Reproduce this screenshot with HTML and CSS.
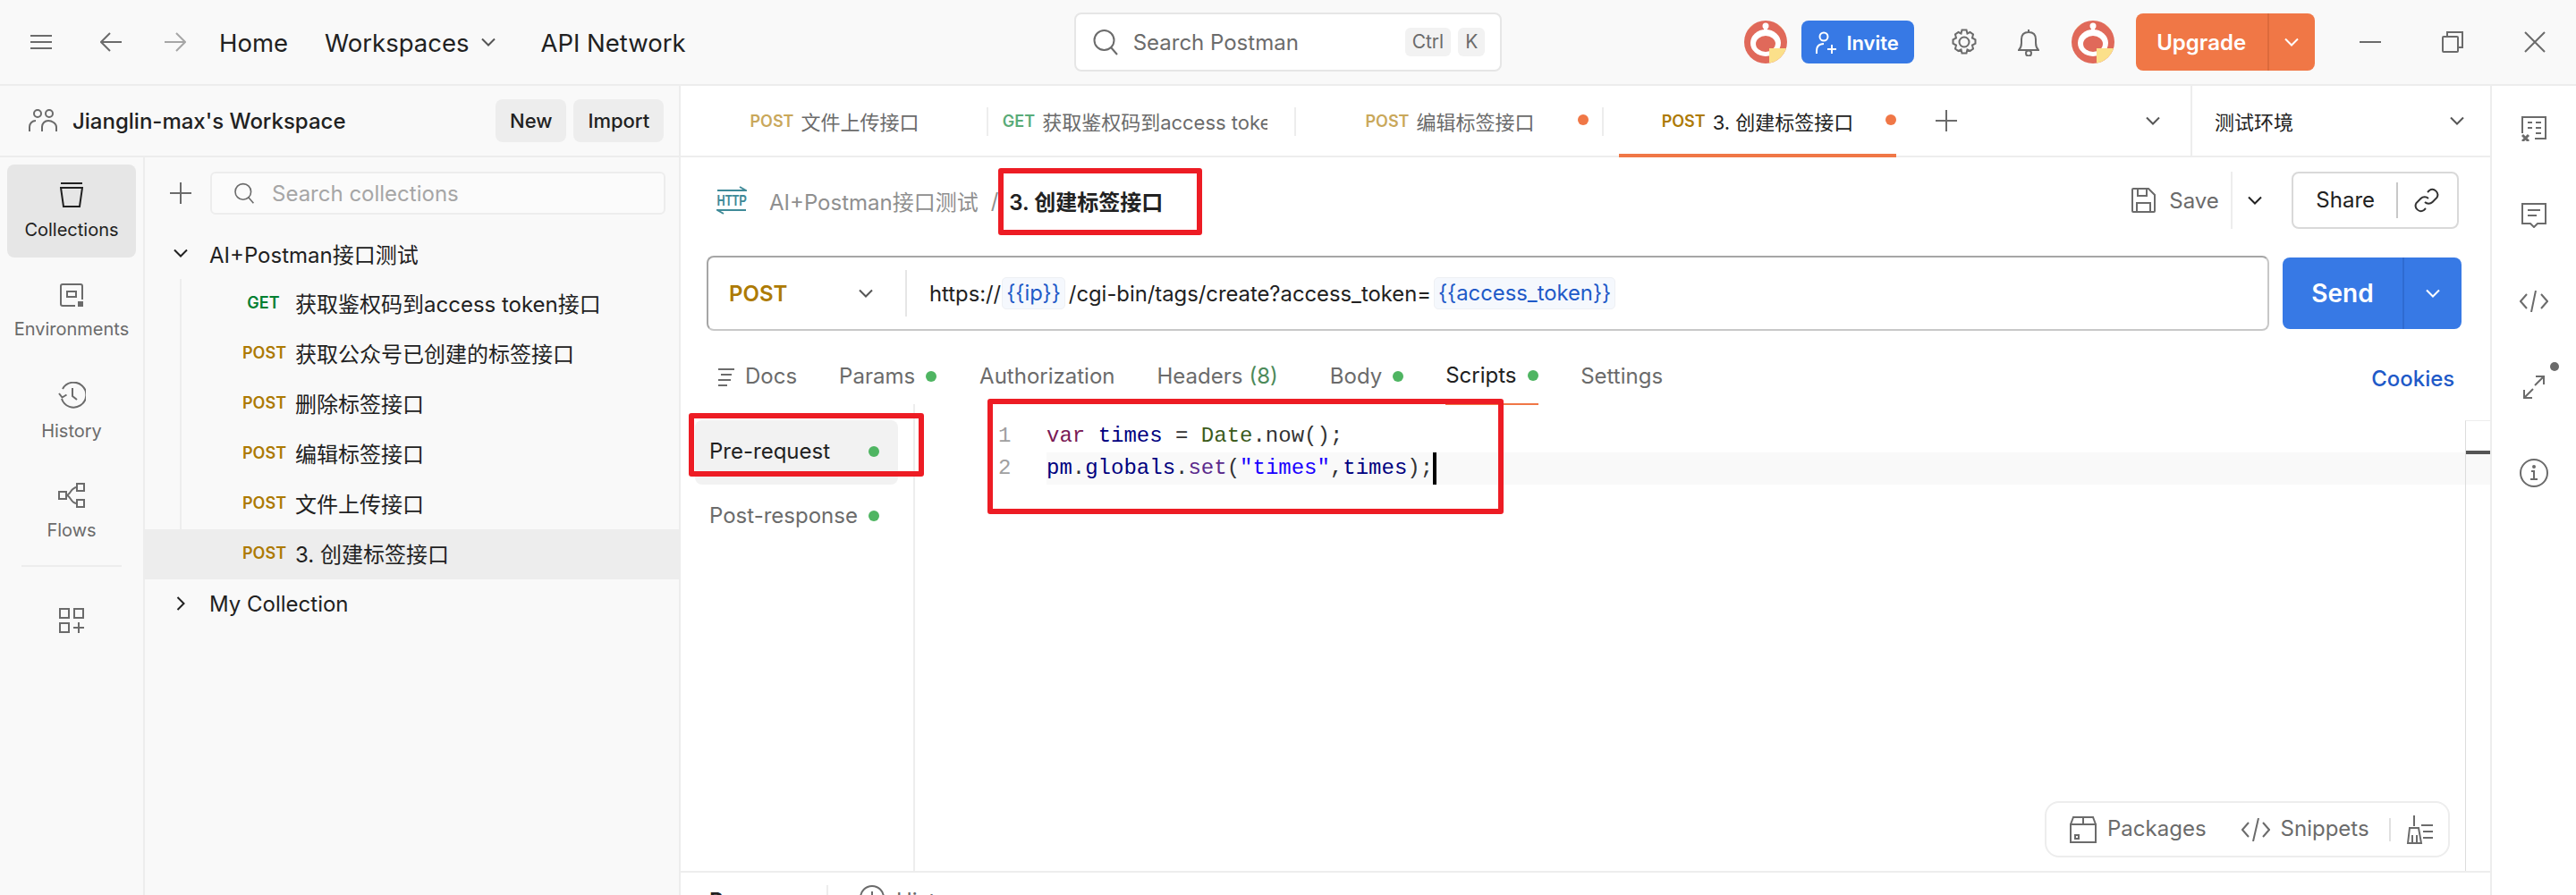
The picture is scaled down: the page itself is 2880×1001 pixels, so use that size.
FILE: index.html
```html
<!DOCTYPE html>
<html lang="en">
<head>
    <meta charset="UTF-8">
    <title>Postman</title>
    <link rel="stylesheet" href="styles.css">
</head>
<body>
    <svg class="sprite" width="0" height="0">
        <defs>
            <clipPath id="avatarClip"><circle cx="24" cy="24" r="24"/></clipPath>
            <symbol id="avatar" viewBox="0 0 48 48">
                <g clip-path="url(#avatarClip)">
                    <rect width="48" height="48" fill="#e0695a"/>
                    <path d="M33 0h15v14zM15 0H0v14z" fill="#fbe08a"/>
                    <rect x="22" y="5" width="4" height="8" fill="#fff"/>
                    <circle cx="24" cy="6" r="3.5" fill="#fff"/>
                    <ellipse cx="24" cy="25" rx="17" ry="15" fill="#fff"/>
                    <ellipse cx="24" cy="26" rx="11" ry="9" fill="#e0695a"/>
                    <rect x="28" y="31" width="20" height="17" fill="#fbe08a"/>
                </g>
            </symbol>
            <symbol id="chev" viewBox="0 0 16 10">
                <path d="M1 1.5 8 8.500l7-7" fill="none" stroke="currentColor" stroke-width="2"/>
            </symbol>
            <symbol id="search" viewBox="0 0 30 30">
                <circle cx="13.500" cy="13" r="11" fill="none" stroke="currentColor" stroke-width="2"/>
                <path d="M21 21l7 8" fill="none" stroke="currentColor" stroke-width="2"/>
            </symbol>
        </defs>
    </svg>

    <header class="topbar">
        <svg class="ico menu" width="24" height="16" viewBox="0 0 24 16"><path d="M0 1h24M0 8h24M0 15h24"/></svg>
        <svg class="ico back" width="24" height="22" viewBox="0 0 24 22"><path d="M11 1 1 11l10 10M1 11h23"/></svg>
        <svg class="ico fwd" width="24" height="22" viewBox="0 0 24 22"><path d="M13 1l10 10-10 10M23 11H0"/></svg>
        <a class="top-link home">Home</a>
        <a class="top-link spaces">Workspaces</a>
        <svg class="top-chev" width="16" height="10"><use href="#chev"/></svg>
        <a class="top-link network">API Network</a>

        <div class="global-search">
            <svg class="gs-icon" width="30" height="30"><use href="#search"/></svg>
            <span class="gs-text">Search Postman</span>
            <span class="key key-ctrl">Ctrl</span>
            <span class="key key-k">K</span>
        </div>

        <svg class="avatar avatar-one" width="48" height="48"><use href="#avatar"/></svg>
        <button class="invite">
            <svg class="ico-white" width="24" height="26" viewBox="0 0 24 26"><circle cx="9" cy="6" r="4.500"/><path d="M1 25v-3c0-5 3-8 8-8M13 20h10M18 15v10"/></svg>
            Invite
        </button>
        <svg class="ico gear" width="30" height="30" viewBox="0 0 30 30"><circle cx="15" cy="15" r="5.500"/><path d="M12.500 1.500h5l1 4 3-1.500 3.500 2.500-1 4 3.500 1.800v4.400l-3.500 1.800 1 4-3.500 2.500-3-1.500-1 4h-5l-1-4-3 1.500L5 22.500l1-4-3.500-1.800v-4.400L6 10.500l-1-4L8.500 4l3 1.500z"/></svg>
        <svg class="ico bell" width="24" height="31" viewBox="0 0 24 31"><path d="M1 24c2-2 3-4 3-8V12c0-5 3-8 8-8s8 3 8 8v4c0 4 1 6 3 8zM12 4V1"/><circle cx="12" cy="27.500" r="3"/></svg>
        <svg class="avatar avatar-two" width="48" height="48"><use href="#avatar"/></svg>
        <div class="upgrade">
            <span class="upgrade-label">Upgrade</span>
            <span class="upgrade-more"><svg width="16" height="10"><use href="#chev"/></svg></span>
        </div>
        <svg class="ico win-min" width="24" height="2" viewBox="0 0 24 2"><path d="M0 1h24"/></svg>
        <svg class="ico win-max" width="24" height="24" viewBox="0 0 24 24"><rect x="1" y="6" width="17" height="17" rx="1"/><path d="M6 6V1h17v17h-5"/></svg>
        <svg class="ico win-close" width="24" height="24" viewBox="0 0 24 24"><path d="M1 1l22 22M23 1 1 23"/></svg>
    </header>

    <div class="app">
        <aside class="sidebar">
            <div class="ws-head">
                <svg class="ico ws-icon" width="32" height="26" viewBox="0 0 32 26"><circle cx="10" cy="5" r="4"/><circle cx="23" cy="5" r="4"/><path d="M1 25v-5c0-4 3-7 7-7M15 25v-5c0-4 3-7 7-7s9 3 9 7v5"/></svg>
                <span class="ws-name">Jianglin-max's Workspace</span>
                <div class="ws-btn ws-new">New</div>
                <div class="ws-btn">Import</div>
            </div>
            <div class="side-body">
                <nav class="rail">
                    <div class="rail-item active">
                        <svg class="ico" width="26" height="28" viewBox="0 0 26 28"><path d="M1 1h24M1 6h24l-3 21H4z"/></svg>
                        <span>Collections</span>
                    </div>
                    <div class="rail-item">
                        <svg class="ico" width="26" height="26" viewBox="0 0 26 26"><path d="M17 25H3a2 2 0 0 1-2-2V3a2 2 0 0 1 2-2h20a2 2 0 0 1 2 2v15M8 9h10v6H8z"/><rect x="20" y="20" width="6" height="6" class="solid"/></svg>
                        <span>Environments</span>
                    </div>
                    <div class="rail-item">
                        <svg class="ico" width="32" height="30" viewBox="0 0 32 30"><path d="M5 19a14 14 0 1 0 1-11M2 13l3.500 4.500 5-3M17 7v9l5 4"/></svg>
                        <span>History</span>
                    </div>
                    <div class="rail-item">
                        <svg class="ico" width="30" height="28" viewBox="0 0 30 28"><rect x="1" y="10" width="8" height="8"/><rect x="21" y="1" width="8" height="8"/><rect x="21" y="19" width="8" height="8"/><path d="M9 14c5 0 5-9 12-9M9 14c5 0 5 9 12 9"/></svg>
                        <span>Flows</span>
                    </div>
                    <div class="rail-divider"></div>
                    <svg class="ico rail-add" width="28" height="28" viewBox="0 0 28 28"><rect x="1" y="1" width="10" height="10"/><rect x="17" y="1" width="10" height="10"/><rect x="1" y="17" width="10" height="10"/><path d="M16 22h12M22 16v12"/></svg>
                </nav>
                <section class="collections">
                    <div class="coll-tools">
                        <svg class="ico coll-plus" width="24" height="24" viewBox="0 0 24 24"><path d="M0 12h24M12 0v24"/></svg>
                        <div class="coll-search">
                            <svg class="coll-search-ico" width="24" height="24"><use href="#search"/></svg>
                            Search collections
                        </div>
                    </div>
                    <div class="coll-row">
                        <svg class="coll-chev" width="16" height="10"><use href="#chev"/></svg>
                        AI+Postman接口测试
                    </div>
                    <div class="tree">
                        <div class="req"><span class="get">GET</span><span>获取鉴权码到access token接口</span></div>
                        <div class="req"><span class="post">POST</span><span>获取公众号已创建的标签接口</span></div>
                        <div class="req"><span class="post">POST</span><span>删除标签接口</span></div>
                        <div class="req"><span class="post">POST</span><span>编辑标签接口</span></div>
                        <div class="req"><span class="post">POST</span><span>文件上传接口</span></div>
                        <div class="req selected"><span class="post">POST</span><span>3. 创建标签接口</span></div>
                    </div>
                    <div class="coll-row">
                        <svg class="coll-chev closed" width="16" height="10"><use href="#chev"/></svg>
                        My Collection
                    </div>
                </section>
            </div>
        </aside>

        <main class="workbench">
            <div class="tabbar">
                <div class="tab sep"><span class="m-post">POST</span><span class="t-name">文件上传接口</span></div>
                <div class="tab sep"><span class="m-get">GET</span><span class="t-name t-clip">获取鉴权码到access token接口</span></div>
                <div class="tab sep"><span class="m-post">POST</span><span class="t-name">编辑标签接口</span><i class="tab-dot"></i></div>
                <div class="tab current"><span class="m-post strong">POST</span><span class="t-name">3. 创建标签接口</span><i class="tab-dot"></i></div>
                <svg class="ico tab-plus" width="24" height="24" viewBox="0 0 24 24"><path d="M0 12h24M12 0v24"/></svg>
                <svg class="tab-more" width="16" height="10"><use href="#chev"/></svg>
                <div class="env">
                    <span>测试环境</span>
                    <svg width="16" height="10"><use href="#chev"/></svg>
                </div>
            </div>

            <div class="request">
                <div class="req-head">
                    <svg class="http" width="34" height="32" viewBox="0 0 34 32">
                        <path d="M1 5h32l-7-4M33 27H1l7 4" fill="none" stroke="#3f8a98" stroke-width="2"/>
                        <text transform="translate(0.500 22) scale(0.75 1)">HTTP</text>
                    </svg>
                    <span class="crumb">AI+Postman接口测试</span>
                    <span class="crumb-sep">/</span>
                    <span class="crumb-now">3. 创建标签接口</span>
                    <svg class="ico save-ico" width="27" height="28" viewBox="0 0 27 28"><path d="M1 2a1 1 0 0 1 1-1h17l7 7v18a1 1 0 0 1-1 1H2a1 1 0 0 1-1-1zM7 1v8h10V1M6 27V17h15v10"/></svg>
                    <span class="save">Save</span>
                    <span class="save-more"><svg width="16" height="10"><use href="#chev"/></svg></span>
                    <div class="share">
                        <span class="share-label">Share</span>
                        <svg class="ico-dark" width="28" height="28" viewBox="0 0 28 28"><path d="M12 16a6 6 0 0 0 8.500 0l5-5A6 6 0 0 0 17 3l-2 2M16 12a6 6 0 0 0-8.500 0l-5 5A6 6 0 0 0 11 25l2-2"/></svg>
                    </div>
                </div>

                <div class="url-row">
                    <div class="url-box">
                        <div class="method"><span>POST</span><svg width="16" height="10"><use href="#chev"/></svg></div>
                        <div class="url">https://<span class="var var-ip">{{ip}}</span>/cgi-bin/tags/create?access_token=<span class="var var-token">{{access_token}}</span></div>
                    </div>
                    <div class="send">
                        <span class="send-label">Send</span>
                        <span class="send-more"><svg width="16" height="10"><use href="#chev"/></svg></span>
                    </div>
                </div>

                <div class="req-tabs">
                    <svg class="ico docs-ico" width="20" height="20" viewBox="0 0 20 20"><path d="M1 1h18M4 7h12M1 13h14M1 19h10"/></svg>
                    <span class="rt rt-docs">Docs</span>
                    <span class="rt rt-params">Params<i class="g-dot"></i></span>
                    <span class="rt rt-auth">Authorization</span>
                    <span class="rt rt-head">Headers <em>(8)</em></span>
                    <span class="rt rt-body">Body<i class="g-dot"></i></span>
                    <span class="rt rt-scripts">Scripts<i class="g-dot"></i></span>
                    <span class="rt rt-settings">Settings</span>
                    <span class="cookies">Cookies</span>
                </div>

                <div class="editor">
                    <div class="phases">
                        <div class="phase on">Pre-request<i class="g-dot"></i></div>
                        <div class="phase">Post-response<i class="g-dot"></i></div>
                    </div>
                    <div class="code">
                        <div class="line"><span class="num">1</span><span class="src"><b class="c-kw">var</b> <b class="c-id">times</b> = <b class="c-cls">Date</b>.now();</span></div>
                        <div class="line now"><span class="num">2</span><span class="src"><b class="c-id">pm</b>.<b class="c-id">globals</b>.<b class="c-fn">set</b>(<b class="c-str">"times"</b>,<b class="c-id">times</b>);<i class="caret"></i></span></div>
                        <div class="code-tools">
                            <svg class="ico" width="30" height="30" viewBox="0 0 30 30"><path d="M1 9h28v20H1zM1 9l3-8h22l3 8M15 1v8"/><rect x="6" y="21" width="4" height="4"/></svg>
                            <span class="tool-text tool-pack">Packages</span>
                            <svg class="ico" width="32" height="26" viewBox="0 0 32 26"><path d="M8 5 1 13l7 8M24 5l7 8-7 8M19 0l-6 26"/></svg>
                            <span class="tool-text tool-snip">Snippets</span>
                            <i class="tool-sep"></i>
                            <svg class="ico broom" width="32" height="32" viewBox="0 0 32 32"><path d="M10 0v12M3 31l2-17h10l3 17zM8 31v-9M13 31v-9M18 11h13M20 18h11M20 25h11"/></svg>
                        </div>
                    </div>
                    <div class="minimap"><div class="mini-band"></div></div>
                </div>

                <div class="bottom">
                    <span class="b-resp">Response</span>
                    <i class="b-sep"></i>
                    <svg class="ico" width="28" height="28" viewBox="0 0 28 28"><circle cx="14" cy="14" r="13"/><path d="M14 7v7l5 4"/></svg>
                    <span class="b-hist">History</span>
                </div>
            </div>
        </main>

        <aside class="right-rail">
            <svg class="ico rr rr-var" width="28" height="28" viewBox="0 0 28 28"><path d="M1 19V1h26v24H15M7 7h5M16 7h6M7 13h5M16 13h6M16 19h6"/><path class="bold" d="M1 21l7 7M8 21l-7 7"/></svg>
            <svg class="ico rr rr-note" width="28" height="28" viewBox="0 0 28 28"><path d="M1 1h26v22H18l-4 4-4-4H1zM7 8h14M7 14h10"/></svg>
            <svg class="ico rr rr-code" width="32" height="24" viewBox="0 0 32 24"><path d="M8 4 1 12l7 8M24 4l7 8-7 8M18 0l-5 24"/></svg>
            <div class="rr rr-expand">
                <svg class="ico" width="28" height="28" viewBox="0 0 28 28"><path d="M15 12 25 2M16 2h9v9M13 16 3 26M12 26H3v-9"/></svg>
                <i class="rr-dot"></i>
            </div>
            <svg class="ico rr rr-info" width="32" height="32" viewBox="0 0 32 32"><circle cx="16" cy="16" r="15"/><path d="M13 14h3v9M12 23h8"/><circle cx="16" cy="9" r="1"/></svg>
        </aside>
    </div>

    <!-- red annotation boxes drawn on the screenshot -->
    <div class="mark mark-title"></div>
    <div class="mark mark-pre"></div>
    <div class="mark mark-code"></div>
</body>
</html>
```

FILE: styles.css
```css
* {
    box-sizing: border-box;
}

html, body {
    margin: 0;
    padding: 0;
}

body {
    position: relative;
    width: 2880px;
    height: 1001px;
    overflow: hidden;
    font-family: Inter, "Noto Sans CJK SC", sans-serif;
    font-size: 24px;
    color: #212121;
    background-color: #fff;
}

i, em, b {
    font-style: normal;
    font-weight: inherit;
}

button {
    font-family: inherit;
    border: none;
}

.sprite {
    position: absolute;
}

.ico {
    display: block;
    flex: none;
    fill: none;
    stroke: #6b6b6b;
    stroke-width: 2;
}

.ico .solid {
    fill: #6b6b6b;
    stroke: none;
}

/* top bar */
.topbar {
    display: flex;
    align-items: center;
    height: 96px;
    padding-left: 34px;
    background-color: #f9f9f9;
    border-bottom: 2px solid #ededed;
}

.menu { margin-right: 54px; }
.back { margin-right: 48px; }
.fwd { margin-right: 37px; stroke: #a6a6a6; }

.top-link {
    padding-top: 2px;
    font-size: 27.5px;
    color: #212121;
}

.home { margin-right: 41px; }
.spaces { margin-right: 14px; }
.top-chev { margin-right: 50px; color: #555; }

.global-search {
    display: flex;
    align-items: center;
    width: 478px;
    height: 66px;
    margin-left: 434px;
    padding-left: 18px;
    background-color: #fff;
    border: 2px solid #e6e6e6;
    border-radius: 8px;
    color: #6b6b6b;
}

.gs-icon { margin-right: 16px; }
.gs-text { width: 304px; }

.key {
    height: 32px;
    line-height: 32px;
    padding: 0 8px;
    font-size: 21px;
    text-align: center;
    background-color: #f2f2f2;
    border-radius: 6px;
}

.key-ctrl { margin-right: 8px; }

.avatar { flex: none; }
.avatar-one { margin-left: 271px; margin-right: 16px; }

.invite {
    display: flex;
    align-items: center;
    justify-content: center;
    gap: 10px;
    width: 126px;
    height: 48px;
    padding-top: 2px;
    font-size: 22px;
    font-weight: 600;
    color: #fff;
    background-color: #3779e5;
    border-radius: 8px;
}

.ico-white {
    fill: none;
    stroke: #fff;
    stroke-width: 2;
}

.gear { margin-left: 41px; }
.bell { margin-left: 45px; }
.avatar-two { margin-left: 36px; margin-right: 24px; }

.upgrade {
    display: flex;
    width: 200px;
    height: 64px;
    color: #fff;
    background-color: #f07746;
    border-radius: 8px;
}

.upgrade-label {
    width: 147px;
    line-height: 66px;
    text-align: center;
    font-weight: 600;
}

.upgrade-more {
    display: flex;
    align-items: center;
    justify-content: center;
    flex: 1;
    border-left: 2px solid #dc6a3c;
}

.win-min { margin-left: 50px; }
.win-max { margin-left: 68px; }
.win-close { margin-left: 68px; }

/* layout under the top bar */
.app {
    display: flex;
    height: 905px;
}

.sidebar {
    width: 761px;
    flex: none;
    background-color: #f9f9f9;
    border-right: 2px solid #ededed;
}

.ws-head {
    display: flex;
    align-items: center;
    height: 80px;
    padding-left: 32px;
    border-bottom: 2px solid #ededed;
}

.ws-icon { margin-right: 17px; }

.ws-name {
    width: 473px;
    flex: none;
    font-weight: 500;
}

.ws-btn {
    height: 48px;
    line-height: 48px;
    padding: 0 16px;
    flex: none;
    font-size: 22px;
    font-weight: 500;
    color: #212121;
    background-color: #ededed;
    border-radius: 8px;
}

.ws-new { margin-right: 8px; }

.side-body {
    display: flex;
    height: 825px;
}

.rail {
    display: flex;
    flex-direction: column;
    align-items: center;
    width: 162px;
    flex: none;
    padding-top: 8px;
    border-right: 2px solid #ededed;
}

.rail-item {
    display: flex;
    flex-direction: column;
    align-items: center;
    justify-content: center;
    width: 144px;
    height: 104px;
    margin-bottom: 8px;
    gap: 13px;
    font-size: 20px;
    color: #6b6b6b;
    border-radius: 8px;
}

.rail-item.active {
    color: #212121;
    background-color: #e6e6e6;
}

.rail-item.active .ico {
    stroke: #212121;
}

.rail-divider {
    width: 112px;
    height: 2px;
    margin-top: 0;
    background-color: #ededed;
}

.rail-add {
    margin-top: 46px;
}

.collections {
    flex: 1;
}

.coll-tools {
    display: flex;
    align-items: center;
    height: 48px;
    margin-top: 16px;
    margin-bottom: 16px;
    padding-left: 28px;
}

.coll-plus { margin-right: 21px; }

.coll-search {
    display: flex;
    align-items: center;
    width: 509px;
    height: 48px;
    padding-left: 24px;
    color: #a6a6a6;
    background-color: #fbfbfb;
    border: 2px solid #ededed;
    border-radius: 6px;
}

.coll-search-ico {
    color: #6b6b6b;
    margin-right: 19px;
}

.coll-row {
    display: flex;
    align-items: center;
    height: 56px;
    padding-left: 32px;
    padding-bottom: 2px;
}

.coll-chev {
    margin-right: 24px;
    color: #212121;
}

.coll-chev.closed {
    transform: rotate(-90deg);
}

.req {
    position: relative;
    display: flex;
    align-items: center;
    height: 56px;
    padding-left: 109px;
    padding-bottom: 3px;
}

.req::before {
    content: "";
    position: absolute;
    left: 39px;
    top: 0;
    bottom: 0;
    width: 2px;
    background-color: #ededed;
}

.req.selected {
    background-color: #ededed;
}

.get, .post {
    width: 47px;
    margin-right: 12px;
    font-size: 18px;
    font-weight: 600;
    text-align: center;
}

.get { color: #007f31; }
.post { color: #ad7a03; }

/* tabs */
.workbench {
    flex: 1;
    min-width: 0;
}

.tabbar {
    display: flex;
    align-items: center;
    height: 80px;
    border-bottom: 2px solid #ededed;
}

.tab {
    position: relative;
    display: flex;
    align-items: center;
    justify-content: center;
    gap: 8px;
    width: 344px;
    height: 78px;
    flex: none;
    font-size: 22px;
}

.tab.sep::after {
    content: "";
    position: absolute;
    right: 0;
    top: 24px;
    height: 32px;
    width: 2px;
    background-color: #ededed;
}

.m-post, .m-get {
    font-size: 18px;
    font-weight: 600;
    opacity: 0.65;
}

.m-post { color: #ad7a03; }
.m-get { color: #007f31; }
.m-post.strong { opacity: 1; }

.t-name { color: #6b6b6b; }
.current .t-name { color: #212121; }

.t-clip {
    display: block;
    width: 252px;
    margin-right: 16px;
    white-space: nowrap;
    overflow: hidden;
}

.tab-dot {
    position: absolute;
    right: 17px;
    top: 32px;
    width: 12px;
    height: 12px;
    background-color: #f07746;
    border-radius: 50%;
}

.tab.current {
    width: 344px;
}

.tab.current::after {
    content: "";
    position: absolute;
    left: 17px;
    right: 17px;
    bottom: -2px;
    height: 4px;
    background-color: #f07746;
}

.tab-plus { margin-left: 27px; }

.tab-more {
    margin-left: 211px;
    color: #555;
    flex: none;
}

.env {
    display: flex;
    align-items: center;
    justify-content: space-between;
    width: 341px;
    height: 78px;
    margin-left: 34px;
    padding: 0 35px 0 25px;
    font-size: 22px;
    color: #212121;
    border-left: 2px solid #ededed;
    flex: none;
}

.env svg { color: #555; }

/* request pane */
.request {
    display: flex;
    flex-direction: column;
    height: 825px;
}

.req-head {
    display: flex;
    align-items: center;
    height: 96px;
    flex: none;
    padding-left: 40px;
}

.http { flex: none; }

.http text {
    font-family: "Liberation Sans", sans-serif;
    font-size: 17px;
    font-weight: 700;
    fill: #3f8a98;
}

.crumb {
    margin-left: 25px;
    color: #8f8f8f;
}

.crumb-sep {
    margin: 0 12px 0 14px;
    color: #8f8f8f;
}

.crumb-now {
    width: 1255px;
    flex: none;
    font-weight: 600;
}

.save-ico { margin-right: 15px; }

.save {
    color: #6b6b6b;
    width: 69px;
    flex: none;
}

.save-more {
    display: flex;
    align-items: center;
    justify-content: center;
    width: 51px;
    height: 64px;
    flex: none;
    margin-right: 17px;
    color: #212121;
    border-left: 2px solid #ededed;
}

.share {
    display: flex;
    align-items: center;
    width: 187px;
    height: 64px;
    flex: none;
    padding-left: 25px;
    background-color: #fff;
    border: 2px solid #d9d9d9;
    border-radius: 8px;
}

.share-label {
    width: 92px;
    height: 40px;
    line-height: 40px;
    margin-right: 18px;
    border-right: 2px solid #c8c8c8;
}

.ico-dark {
    fill: none;
    stroke: #333;
    stroke-width: 2;
}

.url-row {
    display: flex;
    height: 84px;
    flex: none;
    margin-top: 14px;
    padding-left: 29px;
}

.url-box {
    display: flex;
    align-items: center;
    width: 1747px;
    height: 84px;
    background-color: #fff;
    border: 2px solid #a6a6a6;
    border-bottom-color: #c8c8c8;
    border-right-color: #c8c8c8;
    border-radius: 8px;
}

.method {
    display: flex;
    align-items: center;
    justify-content: space-between;
    width: 222px;
    height: 52px;
    padding: 0 36px 0 23px;
    color: #ad7a03;
    font-weight: 600;
    border-right: 2px solid #e6e6e6;
}

.method svg { color: #555; }

.url {
    display: flex;
    align-items: center;
    padding-left: 25px;
    font-size: 23.8px;
}

.var {
    height: 36px;
    line-height: 34px;
    padding: 0 4px;
    color: #1f5ac8;
    background-color: #f5f8fd;
    border: 1px solid #eef0f4;
    border-radius: 5px;
}

.var-ip { margin: 0 4px 0 1px; }
.var-token { margin-left: 3px; }

.send {
    display: flex;
    width: 200px;
    height: 80px;
    margin-top: 2px;
    margin-left: 15px;
    color: #fff;
    background-color: #3779e5;
    border-radius: 8px;
}

.send-label {
    width: 134px;
    line-height: 80px;
    text-align: center;
    font-size: 28px;
    font-weight: 600;
}

.send-more {
    display: flex;
    align-items: center;
    justify-content: center;
    flex: 1;
    border-left: 2px solid #2f6bd0;
}

.req-tabs {
    display: flex;
    align-items: flex-start;
    height: 56px;
    flex: none;
    margin-top: 26px;
    padding-left: 41px;
    color: #6b6b6b;
}

.docs-ico { margin-top: 16px; margin-right: 11px; }

.rt {
    display: flex;
    align-items: center;
    height: 57px;
    padding-top: 6px;
    padding-bottom: 14px;
    line-height: 36px;
    flex: none;
}

.rt-docs { margin-right: 47px; }
.rt-params { margin-right: 48px; }
.rt-auth { margin-right: 47px; }
.rt-head { margin-right: 58px; }
.rt-head em { margin-left: 7px; color: #4c8a5a; }
.rt-body { margin-right: 47px; }

.rt-scripts {
    margin-right: 47px;
    width: 104px;
    color: #212121;
    border-bottom: 2px solid #f07746;
}

.rt-settings { width: 884px; }

.cookies {
    padding-top: 10px;
    line-height: 36px;
    font-weight: 500;
    color: #1f5ac8;
    flex: none;
}

.g-dot {
    display: inline-block;
    flex: none;
    width: 12px;
    height: 12px;
    margin-left: 12px;
    background-color: #4fb562;
    border-radius: 50%;
}

/* scripts editor */
.editor {
    display: flex;
    flex: none;
    height: 524px;
    border-bottom: 2px solid #ededed;
}

.phases {
    width: 262px;
    flex: none;
    padding-top: 18px;
    border-right: 2px solid #ededed;
}

.phase {
    display: flex;
    align-items: center;
    justify-content: space-between;
    width: 227px;
    height: 72px;
    margin-left: 16px;
    padding: 0 21px 3px 16px;
    white-space: nowrap;
    color: #6b6b6b;
    border-radius: 8px;
}

.phase.on {
    color: #212121;
    background-color: #f2f2f2;
}

.code {
    position: relative;
    flex: 1;
    padding-top: 18px;
    font-family: "Liberation Mono", monospace;
    font-size: 24px;
}

.line {
    display: flex;
    height: 36px;
    line-height: 36px;
}

.num {
    width: 147px;
    padding-left: 93px;
    color: #a0a0a0;
    flex: none;
}

.src {
    flex: 1;
    color: #333;
}

.line.now .src {
    background-color: #f9f9f9;
}

.c-kw { color: #7a1a55; }
.c-id { color: #00007f; }
.c-cls { color: #3b5b1b; }
.c-fn { color: #5b2a8c; }
.c-str { color: #1a00ff; }

.caret {
    display: inline-block;
    width: 4px;
    height: 36px;
    vertical-align: top;
    background-color: #000;
}

.code-tools {
    position: absolute;
    right: 17px;
    bottom: 15px;
    display: flex;
    align-items: center;
    width: 453px;
    height: 63px;
    padding-left: 26px;
    font-family: Inter, sans-serif;
    color: #6b6b6b;
    background-color: #fff;
    border: 2px solid #ededed;
    border-radius: 16px;
}

.tool-text { font-size: 24px; padding-bottom: 3px; }
.tool-pack { margin-left: 12px; margin-right: 39px; }
.tool-snip { margin-left: 12px; margin-right: 22px; }

.tool-sep {
    width: 2px;
    height: 26px;
    margin-right: 16px;
    background-color: #e0e0e0;
}

.minimap {
    width: 28px;
    flex: none;
    margin-top: 18px;
    border-left: 1px solid #dcdcdc;
    border-top: 1px solid #ededed;
}

.mini-band {
    height: 38px;
    margin-top: 33px;
    background-color: #f9f9f9;
    border-top: 4px solid #555;
}

.bottom {
    display: flex;
    align-items: flex-start;
    padding-top: 14px;
    padding-left: 32px;
}

.b-resp {
    width: 131px;
    line-height: 36px;
    font-weight: 600;
}

.b-sep {
    width: 2px;
    height: 30px;
    margin-right: 35px;
    background-color: #ededed;
}

.b-hist {
    margin-left: 13px;
    line-height: 36px;
    color: #6b6b6b;
}

/* right rail */
.right-rail {
    display: flex;
    flex-direction: column;
    align-items: center;
    width: 96px;
    flex: none;
    padding-top: 34px;
    border-left: 2px solid #ededed;
}

.rr-var .bold { stroke-width: 3; }
.rr-note { margin-top: 69px; }
.rr-code { margin-top: 70px; }

.rr-expand {
    position: relative;
    margin-top: 70px;
}

.rr-dot {
    position: absolute;
    right: -14px;
    top: -14px;
    width: 10px;
    height: 10px;
    background-color: #6b6b6b;
    border-radius: 50%;
}

.rr-info { margin-top: 66px; }

/* annotation boxes */
.mark {
    position: absolute;
    border: 6px solid #ed1c24;
    border-radius: 3px;
}

.mark-title {
    left: 1116px;
    top: 188px;
    width: 228px;
    height: 75px;
}

.mark-pre {
    left: 770px;
    top: 462px;
    width: 263px;
    height: 71px;
}

.mark-code {
    left: 1104px;
    top: 446px;
    width: 577px;
    height: 129px;
}
```
